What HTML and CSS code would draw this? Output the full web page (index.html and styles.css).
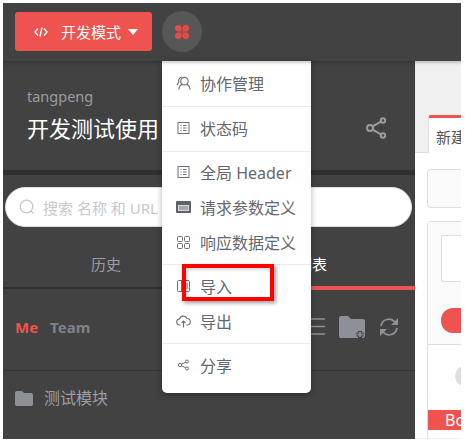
FILE: index.html
```html
<!doctype html>
<html lang="en">
<head>
    <meta charset="utf-8">
    <title>开发测试使用</title>
    <link rel="stylesheet" href="styles.css">
</head>
<body>
    <div class="app">
        <header class="topbar">
            <button class="mode-btn">
                <svg class="code-icon" viewBox="0 0 14 10" width="14" height="10"><path d="M4 1.500 1 5l3 3.500M10 1.500 13 5l-3 3.500M8 .5 6 9.500" fill="none" stroke="#fff" stroke-width="1.400"/></svg>
                <span>开发模式</span>
                <i class="caret"></i>
            </button>
            <div class="round-btn">
                <svg viewBox="0 0 14 14" width="14" height="14"><g fill="#ea4a44"><path d="M6.600 6.600H3.300a3.300 3.300 0 1 1 3.300-3.300z"/><path d="M7.400 6.600h3.300a3.300 3.300 0 1 0-3.300-3.300z"/><path d="M6.600 7.400H3.300a3.300 3.300 0 1 0 3.300 3.300z"/><path d="M7.400 7.400h3.300a3.300 3.300 0 1 1-3.300 3.300z"/></g></svg>
            </div>
        </header>

        <div class="main">
            <aside class="sidebar">
                <section class="project">
                    <div>
                        <div class="owner">tangpeng</div>
                        <h1>开发测试使用</h1>
                    </div>
                    <svg class="share" viewBox="0 0 20 22" width="20" height="22"><g fill="none" stroke="#9a9da3" stroke-width="2"><circle cx="4" cy="11" r="3"/><circle cx="17" cy="3.500" r="2.200"/><circle cx="17" cy="18.500" r="2.200"/><path d="M6.500 9.300 15 4.700M6.500 12.700l8.500 4.600"/></g></svg>
                </section>

                <div class="search">
                    <svg viewBox="0 0 16 16" width="16" height="16"><circle cx="7.500" cy="7.500" r="6.300" fill="none" stroke="#c5c8ce" stroke-width="1.300"/><path d="m12 12 2.500 2.500" stroke="#c5c8ce" stroke-width="1.300"/></svg>
                    <span>搜索 名称 和 URL</span>
                </div>

                <nav class="tabs">
                    <span class="tab">历史</span>
                    <span class="tab tab-active">列表</span>
                </nav>

                <div class="scope">
                    <span class="me">Me</span>
                    <span class="team">Team</span>
                    <div class="tools">
                        <svg viewBox="0 0 20 17" width="20" height="17"><path d="M0 1h20M0 8.500h20M0 16h20" stroke="#8d9097" stroke-width="1.500"/></svg>
                        <svg viewBox="0 0 26 22" width="26" height="22"><path d="M0 2q0-2 2-2h7l3 3h12q2 0 2 2v15q0 2-2 2H2q-2 0-2-2z" fill="#8d9097"/><path d="M21 15v7M17.500 18.500h7" stroke="#424242" stroke-width="4"/><path d="M21 16v5M18.500 18.500h5" stroke="#8d9097" stroke-width="1.800"/></svg>
                        <svg viewBox="0 0 20 20" width="20" height="20"><g fill="none" stroke="#8d9097" stroke-width="1.800"><path d="M2 9a8 8 0 0 1 14-4l2 2"/><path d="M18 11a8 8 0 0 1-14 4l-2-2"/></g><path d="M19 1v7h-7zM1 19v-7h7z" fill="#8d9097"/></svg>
                    </div>
                </div>

                <div class="module">
                    <svg viewBox="0 0 18 15" width="18" height="15"><path d="M0 2q0-2 2-2h5l2 2h7q2 0 2 2v9q0 2-2 2H2q-2 0-2-2z" fill="#8d9097"/></svg>
                    <span>测试模块</span>
                </div>
            </aside>

            <div class="content">
                <div class="tabstrip">
                    <div class="doc-tab">新建</div>
                </div>
                <div class="pane">
                    <div class="url-box"></div>
                    <div class="request">
                        <div class="request-top">
                            <div class="param-box"></div>
                            <div class="send-pill"></div>
                        </div>
                        <div class="request-bottom">
                            <div class="dot"></div>
                            <div class="body-strip">Body</div>
                        </div>
                    </div>
                </div>
            </div>
        </div>

        <div class="menu">
            <ul class="group">
                <li class="item">
                    <svg viewBox="0 0 16 16" width="16" height="16"><g fill="none" stroke="#6b7078" stroke-width="1.200"><circle cx="9" cy="6" r="4"/><path d="M3 15q.5-5 4-5.500M15 15q-.5-5-4-5.500M6 1.500Q2 3 3 7L1 10.500"/></g></svg>
                    协作管理
                </li>
            </ul>
            <ul class="group">
                <li class="item">
                    <svg viewBox="0 0 12 12" width="12" height="12"><g fill="none" stroke="#6b7078"><rect x=".5" y=".5" width="11" height="11"/><path d="M3 3.500h1M3 6h1M3 8.500h1M5.500 3.500H9M5.500 6H9M5.500 8.500H9"/></g></svg>
                    状态码
                </li>
            </ul>
            <ul class="group group-tight">
                <li class="item">
                    <svg viewBox="0 0 12 12" width="12" height="12"><g fill="none" stroke="#6b7078"><rect x=".5" y=".5" width="11" height="11"/><path d="M3 3.500h1M3 6h1M3 8.500h1M5.500 3.500H9M5.500 6H9M5.500 8.500H9"/></g></svg>
                    全局 Header
                </li>
                <li class="item">
                    <svg viewBox="0 0 15 12" width="15" height="12"><rect width="15" height="12" rx="1" fill="#5f636b"/><rect x="2" y="4" width="11" height="6" fill="#d6d8dc"/><path d="M3 6h9M3 8h9" stroke="#777"/></svg>
                    请求参数定义
                </li>
                <li class="item">
                    <svg viewBox="0 0 13 13" width="13" height="13"><g fill="none" stroke="#6b7078"><rect x=".5" y=".5" width="5" height="5" rx="1"/><rect x="7.500" y=".5" width="5" height="5" rx="1"/><rect x=".5" y="7.500" width="5" height="5" rx="1"/><rect x="7.500" y="7.500" width="5" height="5" rx="1"/></g></svg>
                    响应数据定义
                </li>
            </ul>
            <ul class="group group-io">
                <li class="item">
                    <svg viewBox="0 0 13 12" width="13" height="12"><g fill="none" stroke="#6b7078"><rect x=".5" y=".5" width="12" height="11" rx="1"/><path d="M4.500 .5v11M7 4h4M7 6h4M7 8h4"/></g></svg>
                    导入
                </li>
                <li class="item">
                    <svg viewBox="0 0 15 13" width="15" height="13"><g fill="none" stroke="#6b7078" stroke-width="1.100"><path d="M4.500 10H4a3 3 0 0 1-.5-6A4 4 0 0 1 11 3.500 3.200 3.200 0 0 1 11 10h-.5"/><path d="M7.500 12.500V6M5.500 8l2-2 2 2"/></g></svg>
                    导出
                </li>
            </ul>
            <ul class="group group-last">
                <li class="item">
                    <svg viewBox="0 0 12 12" width="12" height="12"><g fill="none" stroke="#6b7078"><circle cx="2.500" cy="6" r="1.700"/><circle cx="9.500" cy="2.500" r="1.500"/><circle cx="9.500" cy="9.500" r="1.500"/><path d="M4 5.200 8.200 3.200M4 6.800l4.200 2"/></g></svg>
                    分享
                </li>
            </ul>
        </div>

        <div class="highlight"></div>
    </div>
</body>
</html>
```

FILE: styles.css
```css
/* reset stuff */
html {
    box-sizing: border-box;
}

*, *:before, *:after {
    box-sizing: inherit;
}

body, h1, ul {
    margin: 0;
    padding: 0;
    font-weight: normal;
}

ul {
    list-style-type: none;
}

/* actual css */
:root {
    --dark: #424242;
    --line: #2f2f2f;
    --red: #ef5350;
    --grey-text: #9a9da3;
    --menu-text: #63676f;
}

body {
    width: 465px;
    height: 443px;
    padding: 3px 4px 4px 3px;
    background: #fff;
    overflow: hidden;
    font-family: "Noto Sans", "Noto Sans CJK SC", sans-serif;
}

.app {
    position: relative;
    width: 458px;
    height: 436px;
    background: var(--dark);
    overflow: hidden;
}

.topbar {
    display: flex;
    align-items: center;
    gap: 10px;
    height: 58px;
    padding: 0 0 1px 12px;
}

.mode-btn {
    display: flex;
    align-items: center;
    width: 137px;
    height: 39px;
    padding: 0 0 0 19px;
    border: 0;
    border-radius: 3px;
    background: var(--red);
    color: #fff;
    font-family: inherit;
    font-size: 15px;
}

.mode-btn span {
    margin-left: 13px;
}

.caret {
    width: 0;
    height: 0;
    margin-left: 7px;
    border: 5px solid transparent;
    border-top: 6px solid #fff;
    border-bottom: 0;
}

.round-btn {
    display: flex;
    align-items: center;
    justify-content: center;
    width: 40px;
    height: 41px;
    border-radius: 50%;
    background: #575757;
}

.main {
    display: flex;
    height: 378px;
}

.sidebar {
    width: 412px;
    flex: none;
    box-shadow: inset 0 4px 4px -3px rgba(0, 0, 0, .3);
}

.project {
    display: flex;
    align-items: flex-end;
    justify-content: space-between;
    height: 114px;
    padding: 25px 29px 28px 24px;
    border-bottom: 5px solid var(--line);
}

.owner {
    color: var(--grey-text);
    font-size: 14.500px;
    line-height: 20px;
}

h1 {
    margin-top: 8px;
    color: #fff;
    font-size: 22px;
    line-height: 28px;
}

.share {
    margin-bottom: 3px;
}

.search {
    display: flex;
    align-items: center;
    gap: 8px;
    height: 40px;
    margin: 12px 3px 0 2px;
    padding-left: 13px;
    border: 1px solid #dcdee2;
    border-radius: 20px;
    background: #fff;
    color: #c5c8ce;
    font-size: 15px;
}

.tabs {
    display: flex;
    align-items: flex-start;
}

.tab {
    width: 50%;
    height: 62px;
    padding-top: 27px;
    border-bottom: 2px solid var(--line);
    text-align: center;
    color: var(--grey-text);
    font-size: 15px;
    line-height: 20px;
}

.tab-active {
    height: 63px;
    border-bottom: 4px solid var(--red);
    color: #fff;
}

.scope {
    display: flex;
    align-items: center;
    height: 81px;
    padding: 0 16px 7px 12px;
    border-bottom: 1px solid #333;
    font-size: 15px;
    font-weight: bold;
}

.me {
    color: var(--red);
}

.team {
    margin-left: 12px;
    color: #7f8289;
}

.tools {
    display: flex;
    align-items: center;
    gap: 14px;
    margin-left: auto;
}

.module {
    display: flex;
    align-items: center;
    gap: 11px;
    padding: 16px 0 0 12px;
    color: var(--grey-text);
    font-size: 16px;
    line-height: 22px;
}

.content {
    flex: 1;
    background: #f0f0f0;
    box-shadow: inset 0 4px 4px -3px rgba(0, 0, 0, .3);
}

.tabstrip {
    height: 92px;
    padding: 54px 0 0 13px;
    border-bottom: 1px solid #ddd;
}

.doc-tab {
    height: 38px;
    padding: 8px 0 0 7px;
    border-left: 1px solid #ddd;
    border-top: 3px solid var(--red);
    border-radius: 3px 0 0 0;
    background: #fff;
    color: #555;
    font-size: 15px;
    white-space: nowrap;
    overflow: hidden;
}

.pane {
    height: 285px;
    padding: 16px 0 0 12px;
    background: #fff;
}

.url-box {
    height: 39px;
    border: 1px solid #ddd;
    border-right: 0;
    border-radius: 4px 0 0 4px;
    background: #fafafa;
}

.request {
    height: 218px;
    margin-top: 13px;
    border-left: 1px solid #ddd;
    border-top: 1px solid #ddd;
    border-radius: 4px 0 0 0;
}

.request-top {
    height: 123px;
    padding: 13px 0 0 13px;
    border-bottom: 1px solid #ddd;
    background: #fafafa;
}

.param-box {
    height: 47px;
    border: 1px solid #ddd;
    border-right: 0;
    border-radius: 3px 0 0 3px;
    background: #fff;
}

.send-pill {
    height: 25px;
    margin-top: 26px;
    border-radius: 12px 0 0 12px;
    background: var(--red);
}

.request-bottom {
    padding-top: 21px;
}

.dot {
    width: 20px;
    height: 20px;
    margin-left: 27px;
    border-radius: 50%;
    background: #ddd;
}

.body-strip {
    height: 20px;
    margin-top: 24px;
    padding-left: 17px;
    background: var(--red);
    color: #fff;
    font-size: 16px;
    line-height: 20px;
    white-space: nowrap;
    overflow: hidden;
}

.menu {
    position: absolute;
    left: 159px;
    top: 58px;
    width: 149px;
    height: 332px;
    padding-top: 1px;
    border-radius: 0 0 5px 5px;
    background: #fff;
    box-shadow: 0 2px 6px rgba(0, 0, 0, .3), inset 0 4px 4px -3px rgba(0, 0, 0, .3);
    color: var(--menu-text);
    font-size: 16px;
}

.group {
    padding: 5px 0 4px;
    border-bottom: 1px solid #e8eaec;
}

.group-tight {
    padding: 4px 0 3px;
}

.group-io {
    padding: 5px 0 3px;
}

.group-last {
    border-bottom: 0;
}

.item {
    display: flex;
    align-items: center;
    height: 35px;
    padding: 0 0 3px 14px;
    white-space: nowrap;
}

.item svg {
    flex: none;
    width: 15px;
    margin-right: 9px;
}

.highlight {
    position: absolute;
    left: 179px;
    top: 261px;
    width: 92px;
    height: 37px;
    border: 4px solid #f00;
    box-shadow: 2px 2px 4px rgba(0, 0, 0, .4), inset 2px 2px 3px rgba(0, 0, 0, .15);
}
```
